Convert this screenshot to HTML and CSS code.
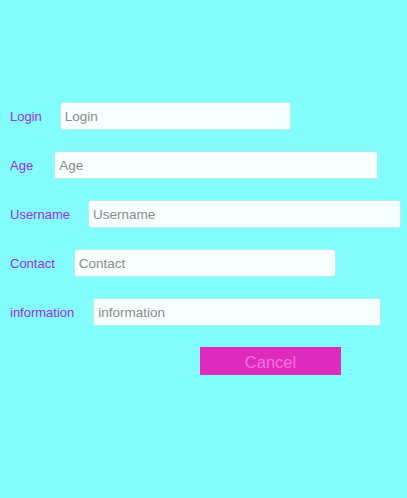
FILE: index.html
```html
<!DOCTYPE html>
<html>
<head>
<meta charset="utf-8">
<link rel="stylesheet" href="styles.css">
</head>
<body>
<form class="form">
  <div class="row"><label class="label">Login</label><input class="field w-login" placeholder="Login"></div>
  <div class="row"><label class="label">Age</label><input class="field w-age" placeholder="Age"></div>
  <div class="row"><label class="label">Username</label><input class="field w-user" placeholder="Username"></div>
  <div class="row"><label class="label">Contact</label><input class="field w-contact" placeholder="Contact"></div>
  <div class="row"><label class="label">information</label><input class="field w-info" placeholder="information"></div>
  <div class="actions"><button type="button" class="cancel">Cancel</button></div>
</form>
</body>
</html>
```
FILE: styles.css
```css
html, body {
  margin: 0;
  padding: 0;
  background: #82fdfc;
  height: 100%;
}
body {
  font-family: "Liberation Sans", Arial, sans-serif;
}
.form {
  padding: 102px 0 0 10px;
  display: flex;
  flex-direction: column;
  gap: 21px;
}
.row {
  display: flex;
  align-items: center;
  height: 28px;
}
.label {
  color: #9b30e6;
  font-size: 13px;
  margin-right: 18px;
  padding-top: 1px;
}
.field {
  box-sizing: border-box;
  height: 28px;
  border: 1px solid #b6ecec;
  border-radius: 3px;
  background: #f6fffd;
  padding: 1px 4px 0;
  font-family: "Liberation Sans", Arial, sans-serif;
  font-size: 13.5px;
  color: #555;
  outline: none;
}
.field::placeholder { color: #8c8c8c; }
.w-login { width: 231px; }
.w-age { width: 324px; margin-left: 3px; }
.w-user { width: 313px; }
.w-contact { width: 262px; margin-left: 1px; }
.w-info { width: 288px; margin-left: 1px; }
.actions {
  display: flex;
  padding-left: 190px;
}
.cancel {
  width: 141px;
  height: 28px;
  border: none;
  background: #df2bbd;
  color: #f86ee4;
  font-family: "Liberation Sans", Arial, sans-serif;
  font-size: 16.5px;
  padding: 2px 0 0;
}
```
